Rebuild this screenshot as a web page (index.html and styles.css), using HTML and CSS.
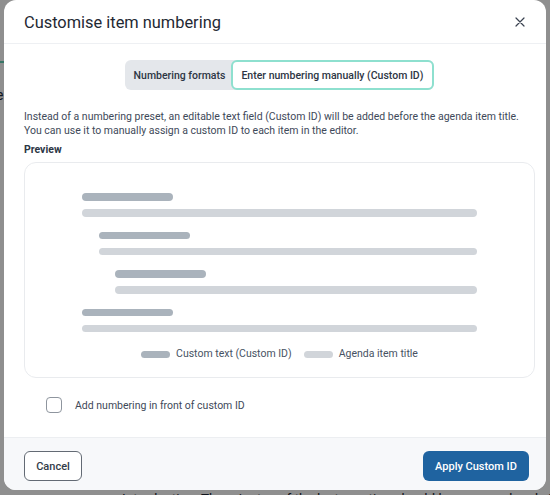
FILE: index.html
```html
<!DOCTYPE html>
<html lang="en">
<head>
<meta charset="utf-8">
<title>Customise item numbering</title>
<link rel="stylesheet" href="styles.css">
</head>
<body>
<div class="page">
  <div class="page-tabline"></div>
  <span class="page-glyph">e</span>
  <p class="page-text">Introduction: The minutes of the last meeting should be approved and signed electronically</p>
</div>
<div class="overlay"></div>
<div class="modal">
  <header class="modal-header">
    <h1 class="modal-title">Customise item numbering</h1>
    <button class="close-btn" aria-label="Close">
      <svg width="10" height="10" viewBox="0 0 10 10"><path d="M1 1L9 9M9 1L1 9" stroke="#3a4250" stroke-width="1.2" stroke-linecap="round"/></svg>
    </button>
  </header>
  <div class="modal-body">
    <div class="seg-row">
      <div class="seg">
        <button class="seg-btn">Numbering formats</button>
        <button class="seg-btn seg-active">Enter numbering manually (Custom ID)</button>
      </div>
    </div>
    <p class="desc">Instead of a numbering preset, an editable text field (Custom ID) will be added before the agenda item title.<br>You can use it to manually assign a custom ID to each item in the editor.</p>
    <h2 class="preview-label">Preview</h2>
    <div class="preview">
      <div class="bars">
        <div class="group">
          <div class="bar bar-id"></div>
          <div class="bar bar-title"></div>
        </div>
        <div class="group indent-1">
          <div class="bar bar-id"></div>
          <div class="bar bar-title"></div>
        </div>
        <div class="group indent-2">
          <div class="bar bar-id"></div>
          <div class="bar bar-title"></div>
        </div>
        <div class="group">
          <div class="bar bar-id"></div>
          <div class="bar bar-title"></div>
        </div>
      </div>
      <div class="legend">
        <span class="swatch swatch-id"></span><span class="legend-text">Custom text (Custom ID)</span>
        <span class="swatch swatch-title"></span><span class="legend-text">Agenda item title</span>
      </div>
    </div>
    <label class="check-row">
      <span class="checkbox"></span>
      <span class="check-label">Add numbering in front of custom ID</span>
    </label>
  </div>
  <footer class="modal-footer">
    <button class="btn btn-cancel">Cancel</button>
    <button class="btn btn-apply">Apply Custom ID</button>
  </footer>
</div>
</body>
</html>
```

FILE: styles.css
```css
* { box-sizing: border-box; }
html, body { margin: 0; padding: 0; }
body {
  width: 550px;
  height: 495px;
  overflow: hidden;
  font-family: Roboto, "Noto Sans", sans-serif;
  background: #ffffff;
  position: relative;
}
.page { position: absolute; inset: 0; }
.page-tabline {
  position: absolute; left: 0; top: 61px; width: 40px; height: 2px;
  background: #62d2b6;
}
.page-glyph {
  position: absolute; left: -4px; top: 87px; font-size: 14px; color: #1e2a3a;
}
.page-text {
  position: absolute; left: 122px; top: 490px; margin: 0;
  font-size: 13.5px; line-height: 16px; color: #1e2530; white-space: nowrap;
}
.overlay {
  position: absolute; inset: 0;
  background: rgba(0, 0, 0, 0.44);
}
.modal {
  position: absolute; left: 4px; top: 0; width: 542px; height: 490px;
  background: #ffffff;
  border-radius: 12px;
  overflow: hidden;
  display: flex;
  flex-direction: column;
}
.modal-header {
  height: 44px;
  flex: none;
  display: flex;
  align-items: center;
  justify-content: space-between;
  padding: 0 20px 0 20px;
  border-bottom: 1px solid #eef0f3;
}
.modal-title {
  margin: 0;
  font-size: 16.4px;
  font-weight: 400;
  color: #1f2933;
  line-height: 1;
  margin-top: 3px;
}
.close-btn {
  border: 0; background: none; padding: 0; width: 10px; height: 10px;
  display: flex; margin-right: 1px; margin-top: 1px;
}
.modal-body {
  flex: 1;
  padding: 16px 11px 0 20px;
}
.seg-row { display: flex; justify-content: center; }
.seg {
  display: flex;
  background: #e4e7eb;
  border-radius: 6px;
  height: 30px;
}
.seg-btn {
  border: 0;
  background: none;
  font-family: inherit;
  font-size: 10.5px;
  font-weight: 500;
  color: #2d3644;
  padding: 0 6px 0 9px;
  height: 30px;
  border-radius: 6px;
}
.seg-active {
  background: #ffffff;
  border: 2px solid #8ee0cf;
  padding: 0 9px 0 8px;
}
.desc {
  margin: 20px 0 0 0;
  font-size: 10.5px;
  line-height: 13.6px;
  color: #3e4959;
}
.preview-label {
  margin: 6px 0 0 0;
  font-size: 10.5px;
  line-height: 14px;
  font-weight: 700;
  color: #2c3645;
}
.preview {
  margin-top: 5px;
  border: 1px solid #e9ebee;
  border-radius: 12px;
  height: 216px;
  padding: 30px 57px 0 57px;
}
.bars { display: flex; flex-direction: column; gap: 14.8px; }
.group { display: flex; flex-direction: column; gap: 8.7px; }
.indent-1 { padding-left: 17px; }
.indent-2 { padding-left: 33px; }
.bar { height: 7.5px; border-radius: 4px; }
.bar-id { width: 91px; background: #aab3bc; }
.bar-title { width: 100%; background: #d1d5da; }
.legend {
  margin-top: 14.7px;
  display: flex;
  align-items: center;
  justify-content: center;
  font-size: 10.5px;
  line-height: 14px;
  color: #475263;
}
.swatch { width: 29px; height: 7px; border-radius: 4px; margin-right: 6px; }
.swatch-id { background: #aab3bc; }
.swatch-title { background: #d1d5da; margin-left: 12px; }
.check-row {
  display: flex;
  align-items: center;
  margin: 19px 0 0 22px;
  gap: 13px;
}
.checkbox {
  width: 16px; height: 16px;
  border: 1px solid #8e959e;
  border-radius: 4px;
  background: #ffffff;
}
.check-label { font-size: 10.5px; color: #3e4959; }
.modal-footer {
  flex: none;
  height: 53px;
  background: #f7f8fa;
  border-top: 1px solid #eceef1;
  display: flex;
  justify-content: space-between;
  align-items: flex-start;
  padding: 13px 17px 0 20px;
}
.btn {
  height: 30px;
  font-family: inherit;
  font-size: 11px;
  font-weight: 500;
  border-radius: 6px;
}
.btn-cancel {
  width: 58px;
  background: #ffffff;
  border: 1px solid #636a74;
  color: #333c49;
}
.btn-apply {
  width: 106px;
  background: #1f63a0;
  border: 0;
  color: #ffffff;
}
```
